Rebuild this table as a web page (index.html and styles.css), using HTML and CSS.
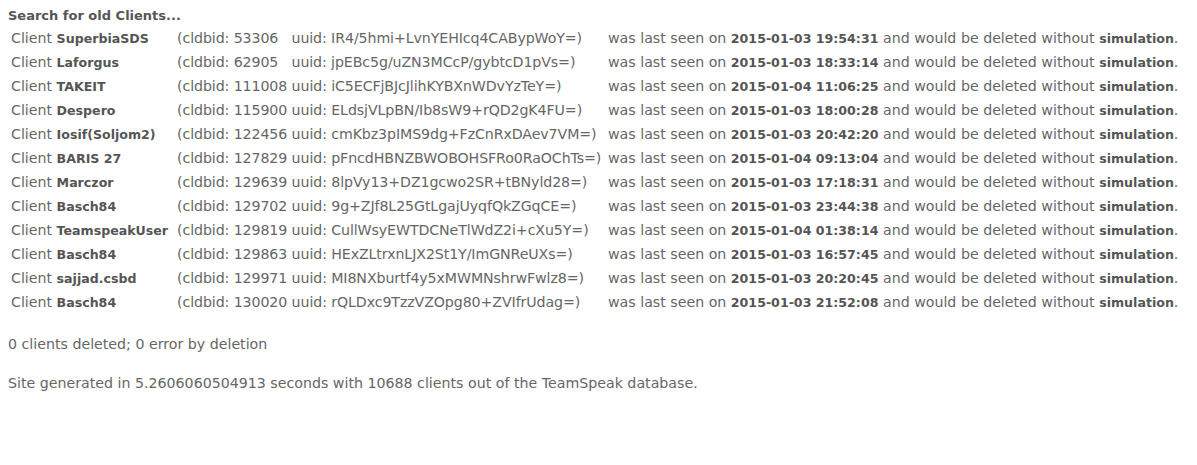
FILE: index.html
```html
<!DOCTYPE html>
<html>
<head>
<meta charset="utf-8">
<link rel="stylesheet" href="styles.css">
</head>
<body>
<h1 class="title">Search for old Clients...</h1>
<table class="clients">
<tr><td class="name">Client <b>SuperbiaSDS</b></td><td class="ids">(cldbid: 53306&nbsp;&nbsp; uuid: IR4/5hmi+LvnYEHIcq4CABypWoY=)</td><td class="seen">was last seen on <b>2015-01-03 19:54:31</b> and would be deleted without <b>simulation</b>.</td></tr>
<tr><td class="name">Client <b>Laforgus</b></td><td class="ids">(cldbid: 62905&nbsp;&nbsp; uuid: jpEBc5g/uZN3MCcP/gybtcD1pVs=)</td><td class="seen">was last seen on <b>2015-01-03 18:33:14</b> and would be deleted without <b>simulation</b>.</td></tr>
<tr><td class="name">Client <b>TAKEIT</b></td><td class="ids">(cldbid: 111008 uuid: iC5ECFjBJcJlihKYBXnWDvYzTeY=)</td><td class="seen">was last seen on <b>2015-01-04 11:06:25</b> and would be deleted without <b>simulation</b>.</td></tr>
<tr><td class="name">Client <b>Despero</b></td><td class="ids">(cldbid: 115900 uuid: ELdsjVLpBN/Ib8sW9+rQD2gK4FU=)</td><td class="seen">was last seen on <b>2015-01-03 18:00:28</b> and would be deleted without <b>simulation</b>.</td></tr>
<tr><td class="name">Client <b>Iosif(Soljom2)</b></td><td class="ids">(cldbid: 122456 uuid: cmKbz3pIMS9dg+FzCnRxDAev7VM=)</td><td class="seen">was last seen on <b>2015-01-03 20:42:20</b> and would be deleted without <b>simulation</b>.</td></tr>
<tr><td class="name">Client <b>BARIS 27</b></td><td class="ids">(cldbid: 127829 uuid: pFncdHBNZBWOBOHSFRo0RaOChTs=)</td><td class="seen">was last seen on <b>2015-01-04 09:13:04</b> and would be deleted without <b>simulation</b>.</td></tr>
<tr><td class="name">Client <b>Marczor</b></td><td class="ids">(cldbid: 129639 uuid: 8lpVy13+DZ1gcwo2SR+tBNyld28=)</td><td class="seen">was last seen on <b>2015-01-03 17:18:31</b> and would be deleted without <b>simulation</b>.</td></tr>
<tr><td class="name">Client <b>Basch84</b></td><td class="ids">(cldbid: 129702 uuid: 9g+ZJf8L25GtLgajUyqfQkZGqCE=)</td><td class="seen">was last seen on <b>2015-01-03 23:44:38</b> and would be deleted without <b>simulation</b>.</td></tr>
<tr><td class="name">Client <b>TeamspeakUser</b></td><td class="ids">(cldbid: 129819 uuid: CullWsyEWTDCNeTlWdZ2i+cXu5Y=)</td><td class="seen">was last seen on <b>2015-01-04 01:38:14</b> and would be deleted without <b>simulation</b>.</td></tr>
<tr><td class="name">Client <b>Basch84</b></td><td class="ids">(cldbid: 129863 uuid: HExZLtrxnLJX2St1Y/ImGNReUXs=)</td><td class="seen">was last seen on <b>2015-01-03 16:57:45</b> and would be deleted without <b>simulation</b>.</td></tr>
<tr><td class="name">Client <b>sajjad.csbd</b></td><td class="ids">(cldbid: 129971 uuid: MI8NXburtf4y5xMWMNshrwFwlz8=)</td><td class="seen">was last seen on <b>2015-01-03 20:20:45</b> and would be deleted without <b>simulation</b>.</td></tr>
<tr><td class="name">Client <b>Basch84</b></td><td class="ids">(cldbid: 130020 uuid: rQLDxc9TzzVZOpg80+ZVIfrUdag=)</td><td class="seen">was last seen on <b>2015-01-03 21:52:08</b> and would be deleted without <b>simulation</b>.</td></tr>
</table>
<p class="summary">0 clients deleted; 0 error by deletion</p>
<p class="summary">Site generated in 5.2606060504913 seconds with 10688 clients out of the TeamSpeak database.</p>
</body>
</html>
```
FILE: styles.css
```css
body {
  margin: 8px;
  background: #ffffff;
  color: #666666;
  font-family: "DejaVu Sans", sans-serif;
  font-size: 14.2px;
}
b {
  color: #555555;
  font-weight: bold;
  font-size: 12.6px;
  line-height: 16px;
}
.title {
  margin: 0 0 1px;
  font-size: 13px;
  line-height: 16px;
  font-weight: bold;
  color: #555555;
}
.clients {
  border-spacing: 2px;
  border-collapse: separate;
}
.clients td {
  padding: 1px;
  line-height: 20px;
  white-space: nowrap;
  vertical-align: middle;
}
.name { width: 162px; }
.ids {
  width: 427px;
  letter-spacing: -0.1px;
}
.summary {
  margin: 20px 0 0;
  line-height: 19px;
}
```
